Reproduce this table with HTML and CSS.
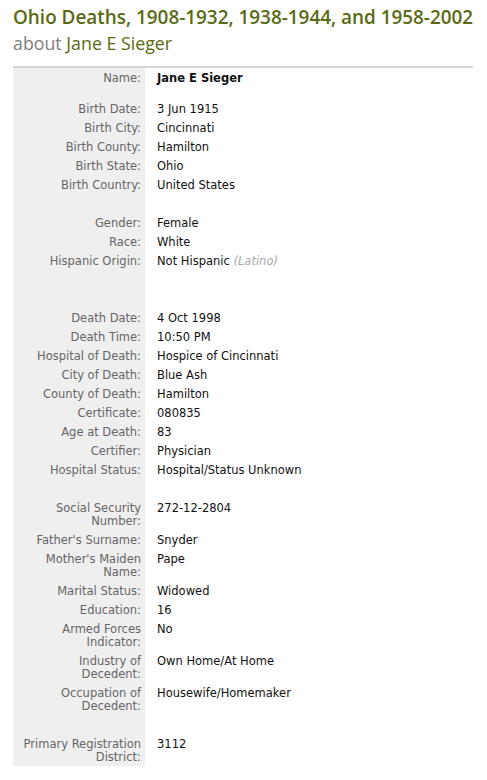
FILE: index.html
```html
<!DOCTYPE html>
<html>
<head>
<meta charset="utf-8">
<link rel="stylesheet" href="styles.css">
</head>
<body>
<div class="page">
  <h1 class="title">
    <span class="title-main">Ohio Deaths, 1908-1932, 1938-1944, and 1958-2002</span>
    <span class="title-sub">about <span class="title-name">Jane E Sieger</span></span>
  </h1>
  <table class="record">
    <tbody>
      <tr><th>Name:</th><td><strong>Jane E Sieger</strong></td></tr>
      <tr class="gap-sm"><th></th><td></td></tr>
      <tr><th>Birth Date:</th><td>3 Jun 1915</td></tr>
      <tr><th>Birth City:</th><td>Cincinnati</td></tr>
      <tr><th>Birth County:</th><td>Hamilton</td></tr>
      <tr><th>Birth State:</th><td>Ohio</td></tr>
      <tr><th>Birth Country:</th><td>United States</td></tr>
      <tr class="gap"><th></th><td></td></tr>
      <tr><th>Gender:</th><td>Female</td></tr>
      <tr><th>Race:</th><td>White</td></tr>
      <tr><th>Hispanic Origin:</th><td>Not Hispanic <span class="note">(Latino)</span></td></tr>
      <tr class="gap"><th></th><td></td></tr>
      <tr class="gap"><th></th><td></td></tr>
      <tr><th>Death Date:</th><td>4 Oct 1998</td></tr>
      <tr><th>Death Time:</th><td>10:50 PM</td></tr>
      <tr><th>Hospital of Death:</th><td>Hospice of Cincinnati</td></tr>
      <tr><th>City of Death:</th><td>Blue Ash</td></tr>
      <tr><th>County of Death:</th><td>Hamilton</td></tr>
      <tr><th>Certificate:</th><td>080835</td></tr>
      <tr><th>Age at Death:</th><td>83</td></tr>
      <tr><th>Certifier:</th><td>Physician</td></tr>
      <tr><th>Hospital Status:</th><td>Hospital/Status Unknown</td></tr>
      <tr class="gap"><th></th><td></td></tr>
      <tr><th>Social Security Number:</th><td>272-12-2804</td></tr>
      <tr><th>Father's Surname:</th><td>Snyder</td></tr>
      <tr><th>Mother's Maiden Name:</th><td>Pape</td></tr>
      <tr><th>Marital Status:</th><td>Widowed</td></tr>
      <tr><th>Education:</th><td>16</td></tr>
      <tr><th>Armed Forces Indicator:</th><td>No</td></tr>
      <tr><th>Industry of Decedent:</th><td>Own Home/At Home</td></tr>
      <tr><th>Occupation of Decedent:</th><td>Housewife/Homemaker</td></tr>
      <tr class="gap"><th></th><td></td></tr>
      <tr><th>Primary Registration District:</th><td>3112</td></tr>
    </tbody>
  </table>
</div>
</body>
</html>
```

FILE: styles.css
```css
html, body {
  margin: 0;
  padding: 0;
  background: #ffffff;
}
.page {
  padding: 4px 14px 0 13px;
  font-family: "DejaVu Sans", Verdana, sans-serif;
}
.title {
  margin: 0 0 11px 0;
  font-family: "Open Sans", "DejaVu Sans", sans-serif;
  font-weight: 600;
}
.title-main {
  display: block;
  font-size: 18.9px;
  line-height: 27px;
  color: #5a6a14;
  white-space: nowrap;
}
.title-sub {
  display: block;
  font-size: 17.8px;
  line-height: 24px;
  color: #808080;
  font-weight: 400;
}
.title-name {
  color: #5a6a14;
}
.record {
  width: 460px;
  border-collapse: collapse;
  border-top: 2px solid #d4d4d4;
  font-size: 11.5px;
  line-height: 13px;
}
.record th {
  width: 123px;
  background: #efefef;
  color: #666666;
  font-weight: normal;
  text-align: right;
  vertical-align: top;
  padding: 4px 4px 2px 5px;
}
.record td {
  color: #111111;
  vertical-align: top;
  padding: 4px 0 2px 12px;
}
.record strong {
  font-weight: bold;
}
.note {
  color: #aaaaaa;
  font-style: italic;
}
.record tr.gap th, .record tr.gap td {
  height: 13px;
}
.record tr.gap-sm th, .record tr.gap-sm td {
  height: 12px;
  padding: 0;
}
```
